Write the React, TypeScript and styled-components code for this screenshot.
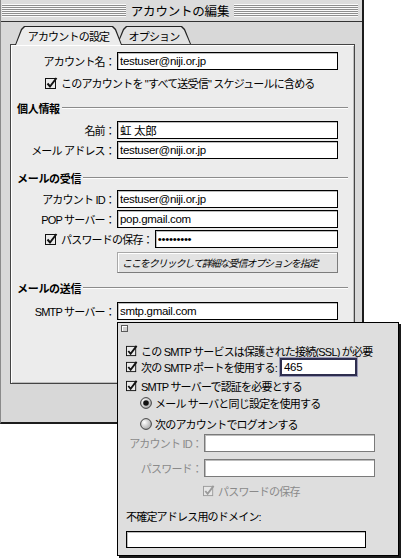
import React from "react";
import styled, { createGlobalStyle } from "styled-components";

const GlobalStyle = createGlobalStyle`
  html, body {
    margin: 0;
    padding: 0;
    background: #fff;
  }
  body {
    font-family: "Liberation Sans", "Noto Sans CJK JP", sans-serif;
    font-size: 11px;
    letter-spacing: -0.8px;
    color: #000;
  }
`;

function CheckBox({ size = 13, disabled = false }: { size?: number; disabled?: boolean }) {
  const ink = disabled ? "#9a9a9a" : "#111";
  return (
    <svg width={size} height={size} viewBox="0 0 13 13">
      <rect x="0.5" y="1.5" width="10" height="10" fill={disabled ? "#e6e6e6" : "#eaeaea"} stroke={ink} />
      <path d="M2.5 6.5 L5 9.5 L11.5 1" fill="none" stroke={ink} strokeWidth="2" />
    </svg>
  );
}

function Radio({ on = false }: { on?: boolean }) {
  const id = on ? "radioOn" : "radioOff";
  return (
    <svg width="12" height="12" viewBox="0 0 12 12">
      <defs>
        <radialGradient id={id} cx="0.35" cy="0.35" r="0.8">
          <stop offset="0" stopColor="#ffffff" />
          <stop offset="1" stopColor="#9c9c9c" />
        </radialGradient>
      </defs>
      <circle cx="6" cy="6" r="5.4" fill={`url(#${id})`} stroke="#333" strokeWidth="0.9" />
      {on && <circle cx="6" cy="6" r="2.8" fill="#111" />}
    </svg>
  );
}

export default function App() {
  return (
    <Screen>
      <GlobalStyle />
      <Window>
        <TitleBar>
          <Stripes />
          <Title>アカウントの編集</Title>
          <Stripes />
        </TitleBar>

        <Body>
          <Tabs>
            <Tab $active>
              <TabFace $active>アカウントの設定</TabFace>
            </Tab>
            <Tab>
              <TabFace>オプション</TabFace>
            </Tab>
          </Tabs>

          <Panel>
            <FieldRow $mt={7}>
              <FieldLabel $w={98}>アカウント名：</FieldLabel>
              <TextField readOnly value="testuser@niji.or.jp" $w={221} />
            </FieldRow>
            <CheckRow $mt={6} $indent={28}>
              <CheckBox />
              <span>このアカウントを "すべて送受信" スケジュールに含める</span>
            </CheckRow>

            <Heading $mt={11}>個人情報</Heading>
            <FieldRow $mt={6}>
              <FieldLabel $w={98}>名前：</FieldLabel>
              <TextField readOnly value="虹 太郎" $w={221} />
            </FieldRow>
            <FieldRow $mt={2}>
              <FieldLabel $w={98}>メール アドレス：</FieldLabel>
              <TextField readOnly value="testuser@niji.or.jp" $w={221} />
            </FieldRow>

            <Heading $mt={12}>メールの受信</Heading>
            <FieldRow $mt={5}>
              <FieldLabel $w={98}>アカウント ID：</FieldLabel>
              <TextField readOnly value="testuser@niji.or.jp" $w={221} />
            </FieldRow>
            <FieldRow $mt={2}>
              <FieldLabel $w={98}>POP サーバー：</FieldLabel>
              <TextField readOnly value="pop.gmail.com" $w={221} />
            </FieldRow>
            <FieldRow $mt={2}>
              <CheckRow $indent={28}>
                <CheckBox />
                <span>パスワードの保存：</span>
              </CheckRow>
              <TextField readOnly type="password" value="secretpw1" $w={183} />
            </FieldRow>
            <PushButton>ここをクリックして詳細な受信オプションを指定</PushButton>

            <Heading $mt={8}>メールの送信</Heading>
            <FieldRow $mt={7}>
              <FieldLabel $w={98}>SMTP サーバー：</FieldLabel>
              <TextField readOnly value="smtp.gmail.com" $w={221} />
            </FieldRow>
          </Panel>
        </Body>
      </Window>

      <Popover>
        <CloseBox />
        <CheckRow $mt={12}>
          <CheckBox size={12} />
          <span>この SMTP サービスは保護された接続(SSL) が必要</span>
        </CheckRow>
        <FieldRow $mt={0} $gap={3}>
          <CheckRow>
            <CheckBox size={12} />
            <span>次の SMTP ポートを使用する:</span>
          </CheckRow>
          <TextField readOnly value="465" $w={77} $focus />
        </FieldRow>
        <CheckRow $mt={3}>
          <CheckBox size={12} />
          <span>SMTP サーバーで認証を必要とする</span>
        </CheckRow>
        <CheckRow $mt={3} $indent={14}>
          <Radio on />
          <span>メール サーバと同じ設定を使用する</span>
        </CheckRow>
        <CheckRow $mt={7} $indent={14}>
          <Radio />
          <span>次のアカウントでログオンする</span>
        </CheckRow>
        <FieldRow $mt={3}>
          <FieldLabel $w={76} $dim>アカウント ID：</FieldLabel>
          <TextField readOnly value="" $w={171} $dim />
        </FieldRow>
        <FieldRow $mt={7}>
          <FieldLabel $w={76} $dim>パスワード：</FieldLabel>
          <TextField readOnly value="" $w={171} $dim />
        </FieldRow>
        <CheckRow $mt={7} $indent={77} $dim>
          <CheckBox size={12} disabled />
          <span>パスワードの保存</span>
        </CheckRow>
        <CheckRow $mt={11}>
          <span>不確定アドレス用のドメイン:</span>
        </CheckRow>
        <TextField readOnly value="" $w={240} $h={17} $mt={8} />
      </Popover>
    </Screen>
  );
}

/* Styles */

const Screen = styled.div`
  position: relative;
  width: 402px;
  height: 558px;
  overflow: hidden;
  background: #fff;
`;

const Window = styled.div`
  width: 364px;
  height: 424px;
  box-sizing: border-box;
  display: flex;
  flex-direction: column;
  background: #d8d8d8;
  border-left: 1px solid #8a8a8a;
  border-right: 2px solid #1c1c1c;
  border-bottom: 2px solid #1c1c1c;
`;

const TitleBar = styled.div`
  height: 21px;
  flex: none;
  display: flex;
  align-items: center;
  gap: 5px;
  padding: 0 4px 0 1px;
  background: #dcdcdc;
  border-bottom: 1px solid #333;
`;

const Stripes = styled.div`
  flex: 1;
  height: 13px;
  background: repeating-linear-gradient(to bottom, #fafafa 0 1px, #8e8e8e 1px 2px);
`;

const Title = styled.div`
  font-size: 12.5px;
  letter-spacing: -0.2px;
  white-space: nowrap;
`;

const Body = styled.div`
  flex: 1;
  padding: 4px 7px 0 9px;
  display: flex;
  flex-direction: column;
`;

const Tabs = styled.div`
  position: relative;
  z-index: 1;
  display: flex;
  align-items: flex-start;
  height: 19px;
  margin-bottom: -1px;
  padding-left: 5px;
`;

const tabShape = `polygon(0 100%, 6px 3px, 9px 0, calc(100% - 9px) 0, calc(100% - 6px) 3px, 100% 100%)`;

const Tab = styled.div<{ $active?: boolean }>`
  position: relative;
  z-index: ${(p) => (p.$active ? 2 : 1)};
  width: ${(p) => (p.$active ? 107 : 74)}px;
  height: ${(p) => (p.$active ? 19 : 18)}px;
  margin-left: ${(p) => (p.$active ? 0 : -5)}px;
  padding: 1px 1px 0 1px;
  box-sizing: border-box;
  background: #222;
  clip-path: ${tabShape};
  display: flex;
`;

const TabFace = styled.div<{ $active?: boolean }>`
  flex: 1;
  display: flex;
  align-items: center;
  justify-content: center;
  background: ${(p) => (p.$active ? "#ececec" : "#e2e2e2")};
  clip-path: ${tabShape};
  white-space: nowrap;
`;

const Panel = styled.div`
  height: 340px;
  box-sizing: border-box;
  display: flex;
  flex-direction: column;
  padding: 0 6px;
  background: #ececec;
  border: 1px solid #444;
  box-shadow: inset 1px 1px 0 #fff, inset -1px -1px 0 #bcbcbc;
`;

const FieldRow = styled.div<{ $mt?: number; $gap?: number }>`
  display: flex;
  align-items: center;
  gap: ${(p) => p.$gap ?? 2}px;
  margin-top: ${(p) => p.$mt ?? 0}px;
`;

const FieldLabel = styled.div<{ $w: number; $dim?: boolean }>`
  width: ${(p) => p.$w}px;
  flex: none;
  text-align: right;
  white-space: nowrap;
  color: ${(p) => (p.$dim ? "#8a8a8a" : "#000")};
`;

const TextField = styled.input<{ $w: number; $h?: number; $mt?: number; $dim?: boolean; $focus?: boolean }>`
  width: ${(p) => p.$w}px;
  height: ${(p) => p.$h ?? 18}px;
  margin: ${(p) => p.$mt ?? 0}px 0 0 0;
  flex: none;
  box-sizing: border-box;
  padding: 0 2px;
  background: #fff;
  border: ${(p) => (p.$focus ? "2px solid #2e2e4e" : p.$dim ? "1px solid #7a7a7a" : "1px solid #000")};
  box-shadow: ${(p) => (p.$focus ? "0 0 0 1px #9a9ab8" : "inset 1px 1px 0 #bdbdbd")};
  border-radius: 0;
  font-family: "Liberation Sans", "Noto Sans CJK JP", sans-serif;
  font-size: 11.5px;
  letter-spacing: -0.3px;
  color: #000;
  outline: none;
`;

const CheckRow = styled.div<{ $mt?: number; $indent?: number; $dim?: boolean }>`
  display: flex;
  align-items: center;
  gap: 3px;
  height: 14px;
  margin-top: ${(p) => p.$mt ?? 0}px;
  margin-left: ${(p) => p.$indent ?? 0}px;
  white-space: nowrap;
  color: ${(p) => (p.$dim ? "#8a8a8a" : "#000")};
`;

const Heading = styled.div<{ $mt: number }>`
  display: flex;
  align-items: center;
  gap: 2px;
  height: 14px;
  margin-top: ${(p) => p.$mt}px;
  font-weight: bold;
  letter-spacing: -0.3px;

  &::after {
    content: "";
    flex: 1;
    height: 1px;
    background: #8c8c8c;
    border-bottom: 1px solid #fff;
  }
`;

const PushButton = styled.div`
  width: 221px;
  height: 21px;
  margin: 4px 0 0 100px;
  padding-left: 4px;
  box-sizing: border-box;
  display: flex;
  align-items: center;
  background: #e3e3e3;
  border: 1px solid #a8a8a8;
  border-right-color: #7c7c7c;
  border-bottom-color: #7c7c7c;
  box-shadow: inset 1px 1px 0 #fff;
  font-size: 10px;
  letter-spacing: -1.1px;
  font-style: italic;
  white-space: nowrap;
`;

const Popover = styled.div`
  position: absolute;
  left: 117px;
  top: 322px;
  width: 282px;
  height: 234px;
  box-sizing: border-box;
  display: flex;
  flex-direction: column;
  padding-left: 8px;
  background: #dedede;
  border: 1px solid #000;
  box-shadow: 2px 2px 0 #1a1a1a;
`;

const CloseBox = styled.div`
  width: 7px;
  height: 7px;
  margin: 2px 0 0 -5px;
  box-sizing: border-box;
  background: #cfcfcf;
  border: 1px solid #5a5a5a;
  box-shadow: inset 1px 1px 0 #fff;
`;
